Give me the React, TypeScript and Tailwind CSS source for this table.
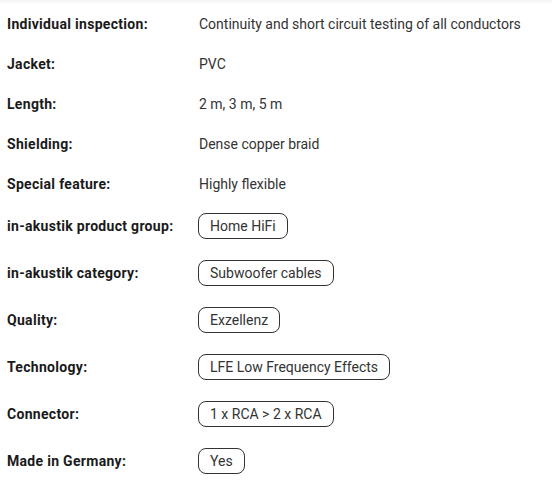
import React from "react";

const textRows: [string, string][] = [
  ["Individual inspection:", "Continuity and short circuit testing of all conductors"],
  ["Jacket:", "PVC"],
  ["Length:", "2 m, 3 m, 5 m"],
  ["Shielding:", "Dense copper braid"],
  ["Special feature:", "Highly flexible"],
];

const badgeRows: [string, string][] = [
  ["in-akustik product group:", "Home HiFi"],
  ["in-akustik category:", "Subwoofer cables"],
  ["Quality:", "Exzellenz"],
  ["Technology:", "LFE Low Frequency Effects"],
  ["Connector:", "1 x RCA > 2 x RCA"],
  ["Made in Germany:", "Yes"],
];

export default function App() {
  return (
    <div className="w-[552px] h-[488px] bg-white relative overflow-hidden" style={{ fontFamily: "Roboto, 'Noto Sans', sans-serif" }}>
      <div className="h-[4px] bg-gradient-to-b from-[#f3f3f3] to-white" />
      <div className="pl-[7px]">
        {textRows.map(([l, v]) => (
          <div key={l} className="flex items-center h-[40px]">
            <div className="w-[192px] shrink-0 text-[14px] font-bold tracking-[0.3px] text-[#1a1a1a] leading-[20px]">{l}</div>
            <div className="text-[14px] text-[#333] leading-[20px]">{v}</div>
          </div>
        ))}
        {badgeRows.map(([l, v]) => (
          <div key={l} className="flex items-center h-[47px] pb-[3px]">
            <div className="w-[191px] shrink-0 text-[14px] font-bold tracking-[0.3px] text-[#1a1a1a] leading-[20px]">{l}</div>
            <div className="h-[26px] flex items-center px-[11px] border border-[#333] rounded-[8px] text-[14px] text-[#333] leading-[20px]">{v}</div>
          </div>
        ))}
      </div>
    </div>
  );
}
